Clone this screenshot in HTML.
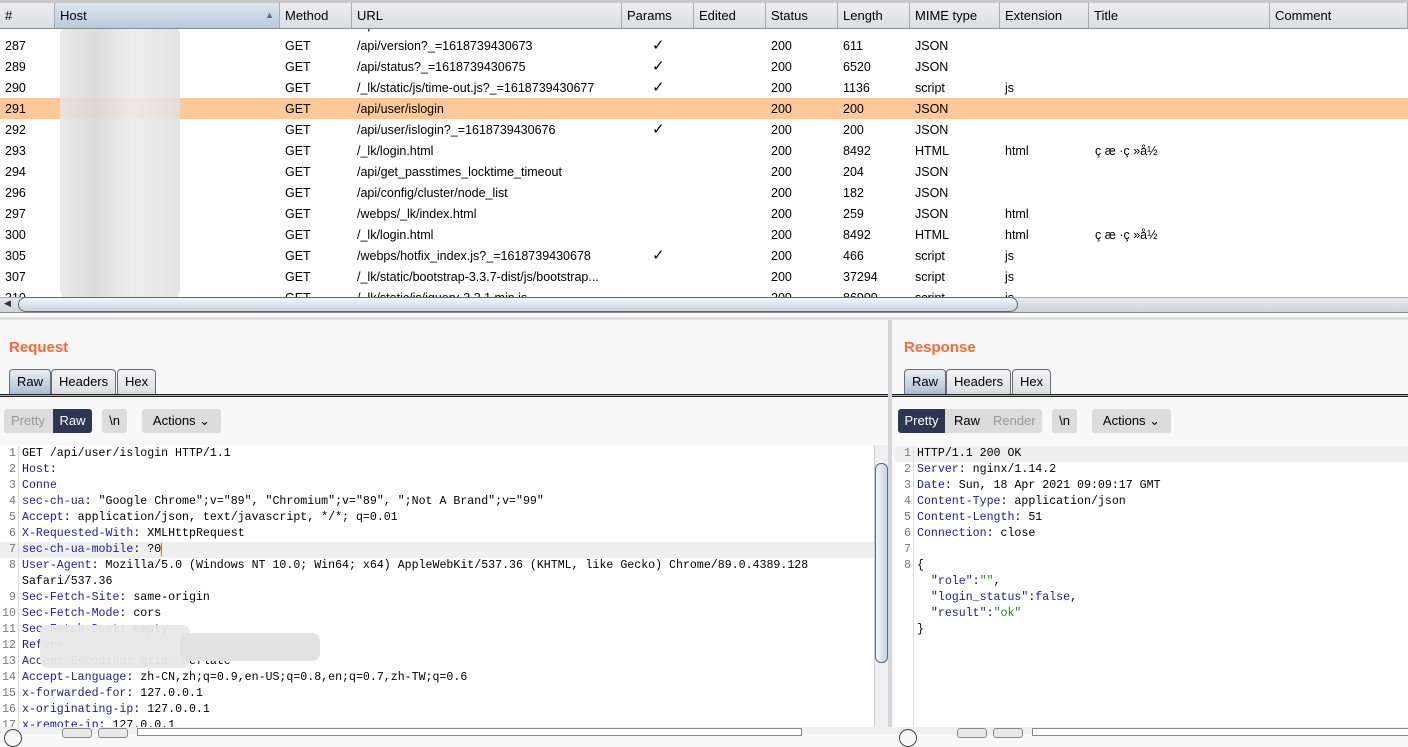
<!DOCTYPE html>
<html><head><style>
*{margin:0;padding:0;box-sizing:border-box}
body{width:1408px;height:734px;overflow:hidden;background:#f8f8f8;font-family:"Liberation Sans",Arial,sans-serif;font-size:12.5px;color:#000;position:relative}
.abs{position:absolute}
#tbl{position:absolute;left:0;top:0;width:1408px;height:297px;background:#fff;overflow:hidden;border-top:3px solid #c8c8c8}
.hd{position:absolute;z-index:5;top:0;height:26px;background:linear-gradient(#ededf0,#dcdde2);border-right:1px solid #a8a8b0;border-bottom:1px solid #8a8a95;line-height:25px;padding-left:5px;font-size:13px}
.row{position:absolute;left:0;width:1408px;height:21px;line-height:22px}
.row span{position:absolute;top:0;white-space:nowrap}
.sel{background:#ffc899}
.btn{position:absolute;height:24px;line-height:24px;background:#dcdcdc;border-radius:3px;font-size:13px;text-align:center}
.tab{position:absolute;height:25px;line-height:24px;border:1px solid #6a6a72;border-bottom:none;border-radius:4px 4px 0 0;background:linear-gradient(#f6f6f8,#dcdde3);font-size:13px;padding:0 7px}
.tab.on{background:linear-gradient(#e8eef4,#a9bfd4)}
.ed{position:absolute;background:#fff;font-family:"Liberation Mono",monospace;font-size:11.6px}
.ln{position:absolute;left:0;width:100%;height:16px;line-height:16px;white-space:pre}
.ln i{font-style:normal;display:inline-block;width:19px;text-align:right;color:#777;padding-right:2px;border-right:1px solid #ddd;margin-right:3px}
.k{color:#1c1c99}.s{color:#1c8c1c}
.lbl{position:absolute;color:#ff6633;font-weight:bold;font-size:15px}
</style></head><body>
<div id="tbl">
<div class="hd" style="left:0;width:55px">#</div>
<div class="hd" style="left:55px;width:225px;background:linear-gradient(#dde6ee,#b8cadb)">Host<span style="position:absolute;right:5px;font-size:9px;color:#4a6a90">▲</span></div>
<div class="hd" style="left:280px;width:72px">Method</div>
<div class="hd" style="left:352px;width:270px">URL</div>
<div class="hd" style="left:622px;width:72px">Params</div>
<div class="hd" style="left:694px;width:72px">Edited</div>
<div class="hd" style="left:766px;width:72px">Status</div>
<div class="hd" style="left:838px;width:72px">Length</div>
<div class="hd" style="left:910px;width:90px">MIME type</div>
<div class="hd" style="left:1000px;width:89px">Extension</div>
<div class="hd" style="left:1089px;width:181px">Title</div>
<div class="hd" style="left:1270px;width:138px">Comment</div>
<div id="rows"></div>
<div class="abs" style="left:60px;top:22px;width:120px;height:275px;background:linear-gradient(90deg,#e6e6e6,#d8d8d8 30%,#ececec 60%,#e0e0e0);opacity:.9;border-radius:10px;z-index:3"></div>
</div>
<div class="abs" style="left:0;top:297px;width:1408px;height:16px;background:linear-gradient(#e6e8ec,#cfd3d8);border-top:1px solid #aaa;border-bottom:1px solid #888"></div>
<div class="abs" style="left:18px;top:297px;width:1000px;height:15px;background:linear-gradient(#f4f6f8,#c5d3e0);border:1px solid #566a80;border-radius:8px"></div>
<div class="abs" style="left:4px;top:298px;font-size:9px;color:#333">◀</div>
<div class="abs" style="left:0;top:317px;width:1408px;height:3px;background:#dcdde0"></div>
<div class="abs" style="left:888px;top:320px;width:4px;height:414px;background:#d4d6da"></div>

<div class="lbl" style="left:9px;top:339px">Request</div>
<div class="tab on" style="left:9px;top:369px">Raw</div>
<div class="tab" style="left:51px;top:369px">Headers</div>
<div class="tab" style="left:117px;top:369px">Hex</div>
<div class="abs" style="left:0;top:394px;width:888px;height:3px;border-top:1px solid #222;border-bottom:1px solid #222;background:#9fb0c4"></div>
<div class="btn" style="left:4px;top:409px;width:88px;background:#dcdcdc"><span style="position:absolute;left:7px;color:#999">Pretty</span><span style="position:absolute;left:49px;width:39px;background:#2e3752;color:#fff;border-radius:0 3px 3px 0">Raw</span></div>
<div class="btn" style="left:102px;top:409px;width:25px">\n</div>
<div class="btn" style="left:142px;top:409px;width:79px">Actions ⌄</div>

<div class="ed" style="left:0;top:445px;width:875px;height:282px;overflow:hidden">
<div class="ln" style="top:1px"><i>1</i>GET /api/user/islogin HTTP/1.1</div>
<div class="ln" style="top:17px"><i>2</i><span class="k">Host</span>:</div>
<div class="ln" style="top:33px"><i>3</i><span class="k">Conne</span></div>
<div class="ln" style="top:49px"><i>4</i><span class="k">sec-ch-ua</span>: "Google Chrome";v="89", "Chromium";v="89", ";Not A Brand";v="99"</div>
<div class="ln" style="top:65px"><i>5</i><span class="k">Accept</span>: application/json, text/javascript, */*; q=0.01</div>
<div class="ln" style="top:81px"><i>6</i><span class="k">X-Requested-With</span>: XMLHttpRequest</div>
<div class="ln" style="top:97px;background:#efefef"><i>7</i><span class="k">sec-ch-ua-mobile</span>: ?0<span style="border-left:1px solid #f60"></span></div>
<div class="ln" style="top:113px"><i>8</i><span class="k">User-Agent</span>: Mozilla/5.0 (Windows NT 10.0; Win64; x64) AppleWebKit/537.36 (KHTML, like Gecko) Chrome/89.0.4389.128</div>
<div class="ln" style="top:129px"><i> </i>Safari/537.36</div>
<div class="ln" style="top:145px"><i>9</i><span class="k">Sec-Fetch-Site</span>: same-origin</div>
<div class="ln" style="top:161px"><i>10</i><span class="k">Sec-Fetch-Mode</span>: cors</div>
<div class="ln" style="top:177px"><i>11</i><span class="k">Sec-Fetch-Dest</span>: empty</div>
<div class="ln" style="top:193px"><i>12</i><span class="k">Refere</span></div>
<div class="ln" style="top:209px"><i>13</i><span class="k">Accept-Encoding</span>: gzip, deflate</div>
<div class="ln" style="top:225px"><i>14</i><span class="k">Accept-Language</span>: zh-CN,zh;q=0.9,en-US;q=0.8,en;q=0.7,zh-TW;q=0.6</div>
<div class="ln" style="top:241px"><i>15</i><span class="k">x-forwarded-for</span>: 127.0.0.1</div>
<div class="ln" style="top:257px"><i>16</i><span class="k">x-originating-ip</span>: 127.0.0.1</div>
<div class="ln" style="top:273px"><i>17</i><span class="k">x-remote-ip</span>: 127.0.0.1</div>
<div class="abs" style="left:40px;top:180px;width:150px;height:43px;background:#e8e8e8;border-radius:8px;opacity:.95"></div>
<div class="abs" style="left:180px;top:188px;width:140px;height:28px;background:#e2e2e2;border-radius:8px"></div>
</div>
<div class="abs" style="left:874px;top:445px;width:14px;height:282px;background:#eef0f2;border-left:1px solid #ccc"></div>
<div class="abs" style="left:875px;top:463px;width:13px;height:200px;background:linear-gradient(90deg,#f4f6f8,#c5d3e0);border:1px solid #566a80;border-radius:6px"></div>

<div class="lbl" style="left:904px;top:339px">Response</div>
<div class="tab on" style="left:904px;top:369px">Raw</div>
<div class="tab" style="left:946px;top:369px">Headers</div>
<div class="tab" style="left:1012px;top:369px">Hex</div>
<div class="abs" style="left:892px;top:394px;width:516px;height:3px;border-top:1px solid #222;border-bottom:1px solid #222;background:#9fb0c4"></div>
<div class="btn" style="left:898px;top:409px;width:144px"><span style="position:absolute;left:0;width:47px;background:#2e3752;color:#fff;border-radius:3px 0 0 3px">Pretty</span><span style="position:absolute;left:56px">Raw</span><span style="position:absolute;left:95px;color:#999">Render</span></div>
<div class="btn" style="left:1052px;top:409px;width:25px">\n</div>
<div class="btn" style="left:1092px;top:409px;width:79px">Actions ⌄</div>

<div class="ed" style="left:895px;top:445px;width:513px;height:282px;overflow:hidden">
<div class="ln" style="top:1px;background:#efefef"><i>1</i>HTTP/1.1 200 OK</div>
<div class="ln" style="top:17px"><i>2</i><span class="k">Server</span>: nginx/1.14.2</div>
<div class="ln" style="top:33px"><i>3</i><span class="k">Date</span>: Sun, 18 Apr 2021 09:09:17 GMT</div>
<div class="ln" style="top:49px"><i>4</i><span class="k">Content-Type</span>: application/json</div>
<div class="ln" style="top:65px"><i>5</i><span class="k">Content-Length</span>: 51</div>
<div class="ln" style="top:81px"><i>6</i><span class="k">Connection</span>: close</div>
<div class="ln" style="top:97px"><i>7</i></div>
<div class="ln" style="top:113px"><i>8</i>{</div>
<div class="ln" style="top:129px"><i> </i>  <span class="k">"role"</span>:<span class="s">""</span>,</div>
<div class="ln" style="top:145px"><i> </i>  <span class="k">"login_status"</span>:<span class="k">false</span>,</div>
<div class="ln" style="top:161px"><i> </i>  <span class="k">"result"</span>:<span class="s">"ok"</span></div>
<div class="ln" style="top:177px"><i> </i>}</div>
<div class="ln" style="top:193px;height:100px"><i style="height:100px"> </i></div>
</div>
<div class="abs" style="left:0;top:727px;width:1408px;height:7px;background:#f0f0f0"></div>
<div class="abs" style="left:4px;top:729px;width:18px;height:18px;border:1.5px solid #444;border-radius:50%"></div>
<div class="abs" style="left:899px;top:729px;width:18px;height:18px;border:1.5px solid #444;border-radius:50%"></div>
<div class="abs" style="left:62px;top:728px;width:30px;height:10px;border:1px solid #888;border-radius:3px;background:#e8e8e8"></div>
<div class="abs" style="left:98px;top:728px;width:30px;height:10px;border:1px solid #888;border-radius:3px;background:#e8e8e8"></div>
<div class="abs" style="left:957px;top:728px;width:30px;height:10px;border:1px solid #888;border-radius:3px;background:#e8e8e8"></div>
<div class="abs" style="left:993px;top:728px;width:30px;height:10px;border:1px solid #888;border-radius:3px;background:#e8e8e8"></div>
<div class="abs" style="left:137px;top:728px;width:665px;height:8px;border:1px solid #888;background:#fff"></div>
<div class="abs" style="left:1032px;top:728px;width:380px;height:8px;border:1px solid #888;background:#fff"></div>
<script>
var R=[
[14,"286","GET","/api/...","","200","","","",""],
[35,"287","GET","/api/version?_=1618739430673","✓","200","611","JSON","",""],
[56,"289","GET","/api/status?_=1618739430675","✓","200","6520","JSON","",""],
[77,"290","GET","/_lk/static/js/time-out.js?_=1618739430677","✓","200","1136","script","js",""],
[98,"291","GET","/api/user/islogin","","200","200","JSON","",""],
[119,"292","GET","/api/user/islogin?_=1618739430676","✓","200","200","JSON","",""],
[140,"293","GET","/_lk/login.html","","200","8492","HTML","html","ç\u00a0æ\u00a0·ç\u00a0»å½\u00a0"],
[161,"294","GET","/api/get_passtimes_locktime_timeout","","200","204","JSON","",""],
[182,"296","GET","/api/config/cluster/node_list","","200","182","JSON","",""],
[203,"297","GET","/webps/_lk/index.html","","200","259","JSON","html",""],
[224,"300","GET","/_lk/login.html","","200","8492","HTML","html","ç\u00a0æ\u00a0·ç\u00a0»å½\u00a0"],
[245,"305","GET","/webps/hotfix_index.js?_=1618739430678","✓","200","466","script","js",""],
[266,"307","GET","/_lk/static/bootstrap-3.3.7-dist/js/bootstrap...","","200","37294","script","js",""],
[287,"310","GET","/_lk/static/js/jquery-3.2.1.min.js","","200","86909","script","js",""]];
var X=[5,285,357,652,771,843,915,1005,1095],h="";
R.forEach(function(r){h+='<div class="row'+(r[1]=="291"?' sel':'')+'" style="top:'+(r[0]-3)+'px">';
for(var i=0;i<9;i++){h+='<span style="left:'+X[i]+'px;'+(i==3?'font-size:15px':'')+'">'+r[i+1]+'</span>';}h+='</div>';});
document.getElementById('rows').innerHTML=h;
</script>
</body></html>
